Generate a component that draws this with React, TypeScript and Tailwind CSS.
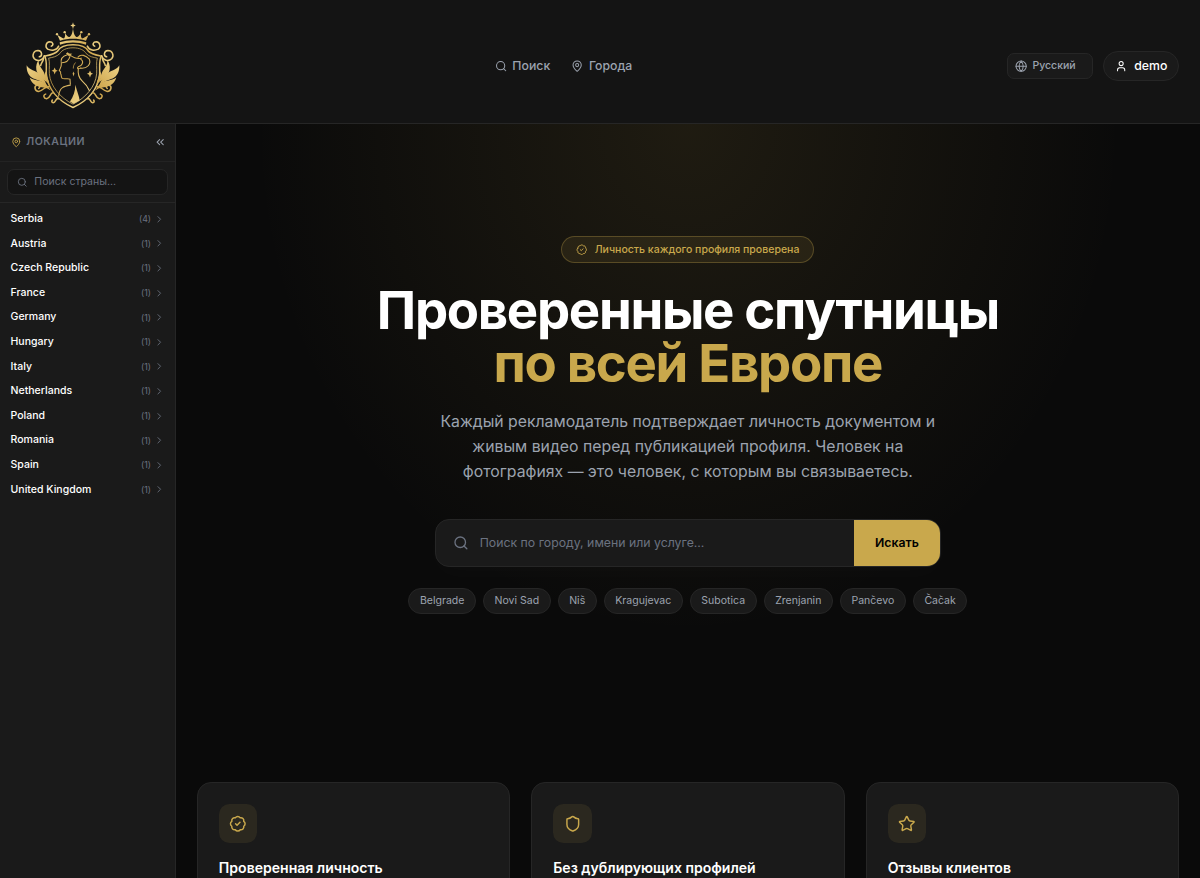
import React from "react";
import {
  BadgeCheck,
  ChevronRight,
  ChevronsLeft,
  Globe,
  MapPin,
  Search,
  Shield,
  Star,
  User,
} from "lucide-react";

const countries = [
  { name: "Serbia", count: 4 },
  { name: "Austria", count: 1 },
  { name: "Czech Republic", count: 1 },
  { name: "France", count: 1 },
  { name: "Germany", count: 1 },
  { name: "Hungary", count: 1 },
  { name: "Italy", count: 1 },
  { name: "Netherlands", count: 1 },
  { name: "Poland", count: 1 },
  { name: "Romania", count: 1 },
  { name: "Spain", count: 1 },
  { name: "United Kingdom", count: 1 },
];

const cities = [
  "Belgrade",
  "Novi Sad",
  "Niš",
  "Kragujevac",
  "Subotica",
  "Zrenjanin",
  "Pančevo",
  "Čačak",
];

const features = [
  { icon: BadgeCheck, title: "Проверенная личность" },
  { icon: Shield, title: "Без дублирующих профилей" },
  { icon: Star, title: "Отзывы клиентов" },
];

// One half of the ornament, mirrored for the other side
const LogoSide: React.FC = () => (
  <g>
    <g fill="none" strokeWidth="4.5" strokeLinecap="round">
      <path d="M146 110 C140 124 124 124 113 119 C104 112 108 98 119 97 C129 97 132 107 124 110" />
      <path d="M103 139 C99 154 82 157 73 148 C64 137 72 123 84 123 C97 124 98 140 88 142" />
      <path d="M101 147 C99 157 94 160 92 168" />
      <path d="M117 232 C106 228 99 245 86 246 C74 245 71 230 81 227 C89 226 92 234 86 237" />
      <path d="M130 250 C120 248 122 266 110 268 C100 267 99 256 107 254" />
      <path d="M145 268 C137 264 138 279 130 280 C125 279 124 275 127 272" />
    </g>
    <g stroke="none">
      <path d="M50 167 C58 182 77 182 91 195 C101 206 107 217 111 231 C98 214 83 212 70 207 C57 200 49 186 50 167Z" />
      <path d="M59 204 C75 215 91 211 104 220 C112 227 116 234 122 243 C106 231 94 237 80 229 C68 223 62 215 59 204Z" />
      <path d="M87 150 C82 166 97 176 102 189 C106 199 107 209 111 220 C97 206 82 198 79 181 C77 167 81 158 87 150Z" />
      <path d="M109 184 C106 196 117 208 119 228 C105 214 98 197 109 184Z" />
    </g>
  </g>
);

const Logo: React.FC = () => (
  <svg
    viewBox="48 35 282 268"
    className="w-[107px] h-[102px]"
    fill="url(#gold)"
    stroke="url(#gold)"
  >
    <defs>
      <linearGradient
        id="gold"
        gradientUnits="userSpaceOnUse"
        x1="60"
        y1="40"
        x2="310"
        y2="300"
      >
        <stop offset="0" stopColor="#b98a35" />
        <stop offset="0.25" stopColor="#ecd083" />
        <stop offset="0.5" stopColor="#cda44b" />
        <stop offset="0.75" stopColor="#ecd083" />
        <stop offset="1" stopColor="#b98a35" />
      </linearGradient>
    </defs>

    {/* crown */}
    <g stroke="none">
      <path d="M189 38 L191 45 L197 48 L191 51 L189 59 L187 51 L181 48 L187 45Z" />
      <path d="M150 94 L142 76 C149 80 156 87 162 87 C166 83 166 76 165 70 C170 79 175 85 180 82 C186 77 187 69 189 58 C191 69 192 77 198 82 C203 85 208 79 213 70 C212 76 212 83 216 87 C222 87 229 80 236 76 L228 94 C203 86 175 86 150 94Z" />
      <path d="M149 98 C175 90 203 90 229 98 L228 106 C202 97 176 97 150 106Z" />
      <circle cx="141" cy="74" r="3.5" />
      <circle cx="164" cy="68" r="3.5" />
      <circle cx="214" cy="68" r="3.5" />
      <circle cx="237" cy="74" r="3.5" />
    </g>

    {/* shield */}
    <path
      d="M189 106 C167 106 149 114 143 125 C133 135 118 137 104 140 C112 153 108 174 109 193 C112 238 145 275 189 294 C233 275 266 238 269 193 C270 174 266 153 274 140 C260 137 245 135 235 125 C229 114 211 106 189 106Z"
      fill="none"
      strokeWidth="4.5"
    />
    <path
      d="M189 115 C169 115 155 122 150 132 C140 142 127 144 116 146 C120 158 117 176 118 193 C121 230 150 265 189 284 C228 265 257 230 260 193 C261 176 258 158 262 146 C251 144 238 142 228 132 C223 122 209 115 189 115Z"
      fill="none"
      strokeWidth="2.2"
    />

    <LogoSide />
    <g transform="translate(378 0) scale(-1 1)">
      <LogoSide />
    </g>

    {/* portrait */}
    <g fill="none" strokeWidth="3.2" strokeLinecap="round">
      <path d="M172 136 C157 140 151 150 154 163 C155 172 151 176 148 183 C153 186 153 189 152 193 C155 196 152 200 156 206 C162 211 172 205 180 209 L181 224" />
      <path d="M181 227 C163 230 148 233 146 260" />
      <path d="M156 160 C168 160 177 152 180 141" />
      <path d="M180 137 C190 144 202 150 214 146" />
      <path d="M204 143 C212 132 228 138 238 149 C244 164 232 178 212 176" />
      <path d="M212 149 C222 155 219 168 205 172 C200 176 203 180 212 176" />
      <path d="M205 177 C203 192 207 206 217 215 C226 223 233 230 238 243" />
      <path d="M196 160 C191 166 190 170 190 176" strokeWidth="2.2" />
    </g>
    <g stroke="none">
      <path d="M196 226 C201 246 208 262 209 273 L191 283 L180 276 C190 262 196 246 196 226Z" />
      <path d="M168 132 L173 128 L177 132 L187 133 L177 140Z" />
      <path d="M190 186 L193 192 L191 201 L188 193Z" />
      <path d="M134 174 L137 181 L143 184 L137 187 L134 195 L131 187 L125 184 L131 181Z" />
      <path d="M240 183 L243 190 L249 193 L243 196 L240 204 L237 196 L231 193 L237 190Z" />
    </g>
  </svg>
);

const Header: React.FC = () => (
  <header className="h-[141px] shrink-0 flex items-center justify-between bg-[#141414] border-b border-[#262626] pt-2.5 pl-[30px] pr-6">
    <Logo />
    <nav className="flex items-center gap-6 text-sm font-medium text-[#9ca3af]">
      <a className="flex items-center gap-1.5">
        <Search size={14} />
        Поиск
      </a>
      <a className="flex items-center gap-1.5">
        <MapPin size={14} />
        Города
      </a>
    </nav>
    <div className="flex items-center gap-3">
      <div className="w-[98px] flex items-center gap-1.5 rounded-lg border border-[#262626] bg-[#1a1a1a] px-2 py-1.5 text-xs font-medium text-[#9ca3af]">
        <Globe size={14} />
        Русский
      </div>
      <div className="flex items-center gap-2 rounded-full border border-[#262626] bg-[#1a1a1a] px-3 py-1.5 text-sm font-medium text-white">
        <User size={14} />
        demo
      </div>
    </div>
  </header>
);

const Sidebar: React.FC = () => (
  <aside className="w-[200px] shrink-0 bg-[#1a1a1a] border-r border-[#262626]">
    <div className="h-[43px] flex items-center justify-between pl-3 pr-2.5 border-b border-[#232323]">
      <div className="flex items-center gap-1.5 text-xs font-semibold tracking-wider text-[#6b7280]">
        <MapPin size={12} className="text-[#c9a84c]" />
        ЛОКАЦИИ
      </div>
      <ChevronsLeft size={14} className="text-[#9ca3af]" />
    </div>
    <div className="p-2 border-b border-[#262626]">
      <div className="flex items-center gap-2 rounded-lg border border-[#262626] bg-[#141414] px-2.5 py-1.5 text-xs text-[#6b7280]">
        <Search size={12} />
        Поиск страны...
      </div>
    </div>
    <ul className="py-1">
      {countries.map((country) => (
        <li
          key={country.name}
          className="h-7 flex items-center justify-between px-3 text-xs font-medium text-white"
        >
          {country.name}
          <span className="flex items-center gap-[3px] text-[10px] font-normal text-[#6b7280]">
            ({country.count})
            <ChevronRight size={12} />
          </span>
        </li>
      ))}
    </ul>
  </aside>
);

const Hero: React.FC = () => (
  <section className="flex flex-col items-center pt-32 pb-[127px] text-center bg-[radial-gradient(ellipse_at_top,rgba(201,168,76,0.11)_0%,transparent_60%)]">
    <div className="flex items-center gap-2 rounded-full border border-[#c9a84c]/30 bg-[#c9a84c]/10 px-4 py-1.5 text-xs font-medium text-[#c9a84c]">
      <BadgeCheck size={13} />
      Личность каждого профиля проверена
    </div>
    <h1 className="mt-6 text-[60px] leading-none font-bold tracking-tight text-white">
      Проверенные спутницы
      <span className="block text-[#c9a84c]">по всей Европе</span>
    </h1>
    <p className="mt-6 max-w-xl text-lg text-[#9ca3af]">
      Каждый рекламодатель подтверждает личность документом и живым видео перед
      публикацией профиля. Человек на фотографиях — это человек, с которым вы
      связываетесь.
    </p>
    <div className="mt-10 w-[576px] h-[54px] flex items-stretch overflow-hidden rounded-2xl border border-[#262626] bg-[#1a1a1a] shadow-[0_8px_30px_rgba(255,255,255,0.02)]">
      <div className="flex-1 flex items-center gap-3 pl-5 text-sm text-[#6b7280]">
        <Search size={18} />
        Поиск по городу, имени или услуге...
      </div>
      <button className="bg-[#c9a84c] px-6 text-sm font-semibold text-black">
        Искать
      </button>
    </div>
    <div className="mt-6 flex justify-center gap-2">
      {cities.map((city) => (
        <span
          key={city}
          className="rounded-full border border-[#262626] bg-[#1a1a1a] px-3 py-1.5 text-xs text-[#9ca3af]"
        >
          {city}
        </span>
      ))}
    </div>
  </section>
);

const App: React.FC = () => {
  return (
    <div className="[zoom:0.8785] h-[999.4px] overflow-hidden flex flex-col bg-[#0a0a0a] font-['Inter',sans-serif]">
      <Header />
      <div className="flex-1 min-h-0 flex">
        <Sidebar />
        <main className="flex-1">
          <Hero />
          <section className="grid grid-cols-3 gap-6 px-6 py-16">
            {features.map(({ icon: Icon, title }) => (
              <div
                key={title}
                className="h-[200px] rounded-2xl border border-[#262626] bg-[#1a1a1a] p-6"
              >
                <div className="size-11 flex items-center justify-center rounded-xl bg-[#c9a84c]/10 text-[#c9a84c]">
                  <Icon size={20} />
                </div>
                <h3 className="mt-4 text-base font-semibold text-white">
                  {title}
                </h3>
              </div>
            ))}
          </section>
        </main>
      </div>
    </div>
  );
};

export default App;
